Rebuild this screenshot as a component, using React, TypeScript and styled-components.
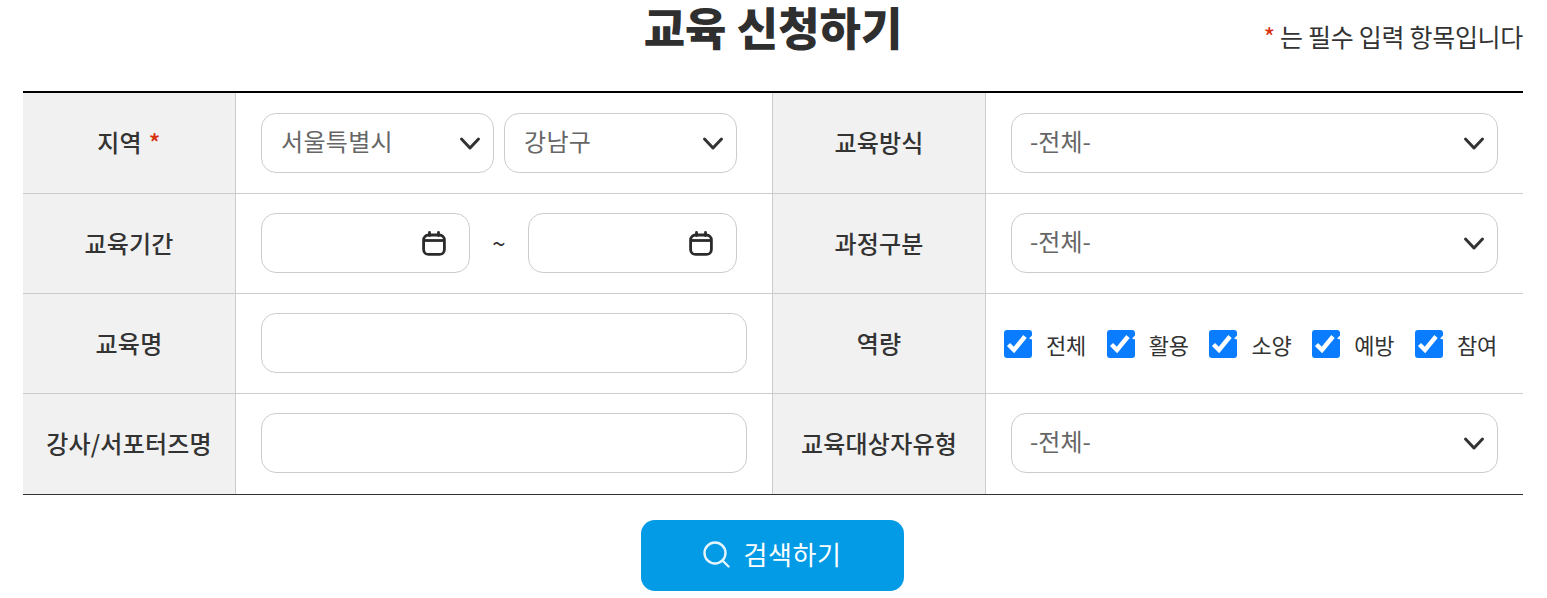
import React from "react";
import styled, { createGlobalStyle } from "styled-components";

const Global = createGlobalStyle`
  html, body { margin: 0; padding: 0; background: #fff; }
  body { font-family: "Noto Sans CJK KR", "Noto Sans", sans-serif; color: #333; }
  * { box-sizing: border-box; }
`;

const Page = styled.div`
  width: 1547px;
  height: 598px;
  overflow: hidden;
  padding: 0 24px 0 23px;
`;
const Header = styled.header`
  display: grid;
  grid-template-columns: 1fr auto 1fr;
  height: 91px;
`;
const Title = styled.h2`
  grid-column: 2;
  margin: 0;
  padding-top: 5px;
  font-size: 45px;
  line-height: 44px;
  font-weight: 900;
  color: #2f2f2f;
`;
const Note = styled.p`
  grid-column: 3;
  justify-self: end;
  margin: 19px 0 0;
  font-size: 25px;
  line-height: 34px;
  color: #333;
  letter-spacing: -0.3px;
`;
const Star = styled.span`
  color: #d9300f;
`;
const Table = styled.div`
  display: grid;
  grid-template-columns: 213px 537px 213px 537px;
  grid-template-rows: 101px 100px 100px 100px;
  border-top: 2px solid #000;
  border-bottom: 1px solid #333;
`;
const Th = styled.div<{ $last?: boolean }>`
  display: flex;
  align-items: center;
  justify-content: center;
  gap: 7px;
  background: #f1f1f1;
  padding-bottom: ${(p) => (p.$last ? "4px" : "3px")};
  border-right: 1px solid #ccc;
  border-bottom: ${(p) => (p.$last ? "none" : "1px solid #ccc")};
  font-size: 24px;
  font-weight: 500;
  color: #333;
  letter-spacing: 0.2px;
`;
const Td = styled.div<{ $last?: boolean; $edge?: boolean }>`
  display: flex;
  align-items: center;
  gap: 10px;
  padding: 0 25px ${(p) => (p.$last ? "2px" : "1px")};
  border-right: ${(p) => (p.$edge ? "none" : "1px solid #ccc")};
  border-bottom: ${(p) => (p.$last ? "none" : "1px solid #ccc")};
`;
const CheckTd = styled(Td)`
  padding: 0 26px 1px 18px;
  justify-content: space-between;
  gap: 0;
`;
const SelectWrap = styled.div<{ $w: number }>`
  position: relative;
  width: ${(p) => p.$w}px;
  height: 60px;
  flex: none;
`;
const Select = styled.select<{ $narrow?: boolean }>`
  width: 100%;
  height: 100%;
  appearance: none;
  background: #fff;
  border: 1px solid #ccc;
  border-radius: 15px;
  padding: 0 50px 5px ${(p) => (p.$narrow ? "19px" : "18px")};
  font-family: inherit;
  font-size: 24px;
  letter-spacing: ${(p) => (p.$narrow ? "0.3px" : "0")};
  color: #666;
  outline: none;
`;
const Chevron = styled.svg`
  position: absolute;
  right: 12px;
  top: 19px;
  pointer-events: none;
`;
const Input = styled.input<{ $w: number }>`
  width: ${(p) => p.$w}px;
  height: 60px;
  flex: none;
  background: #fff;
  border: 1px solid #ccc;
  border-radius: 15px;
  padding: 0 18px;
  font-family: inherit;
  font-size: 24px;
  outline: none;
`;
const DateWrap = styled.div`
  position: relative;
  width: 209px;
  height: 60px;
  flex: none;
`;
const CalIcon = styled.svg`
  position: absolute;
  right: 24px;
  top: 18px;
`;
const Tilde = styled.span`
  width: 58px;
  margin: 0 -10px;
  padding-bottom: 2px;
  flex: none;
  text-align: center;
  font-size: 24px;
  color: #333;
`;
const CheckItem = styled.label`
  display: flex;
  align-items: center;
  gap: 14px;
  padding-top: 1px;
  font-size: 22px;
  color: #333;
  letter-spacing: -0.2px;
`;
const CheckBox = styled.svg`
  flex: none;
`;
const Actions = styled.div`
  display: flex;
  justify-content: center;
  padding: 25px 1px 0 0;
`;
const SearchButton = styled.button`
  display: flex;
  align-items: center;
  justify-content: center;
  gap: 13px;
  width: 263px;
  height: 71px;
  background: #039be5;
  border: none;
  border-radius: 14px;
  color: #fff;
  font-family: inherit;
  font-size: 26px;
  letter-spacing: 0.6px;
  padding: 0 1px 4px 0;
`;

const Arrow = () => (
  <Chevron width="24" height="22" viewBox="0 0 24 22" fill="none">
    <path d="M3.5 7l8.5 9 8.5-9" stroke="#333" strokeWidth="3" strokeLinecap="round" strokeLinejoin="round" />
  </Chevron>
);

const Drop = ({ w, value }: { w: number; value: string }) => (
  <SelectWrap $w={w}>
    <Select defaultValue={value} $narrow={w < 300}>
      <option>{value}</option>
    </Select>
    <Arrow />
  </SelectWrap>
);

const DateField = () => (
  <DateWrap>
    <Input $w={209} />
    <CalIcon width="24" height="25" viewBox="0 0 24 25" fill="none">
      <rect x="1.6" y="4" width="20.8" height="19.4" rx="5" stroke="#2b2b2b" strokeWidth="2.8" />
      <path d="M2 9.5h20" stroke="#2b2b2b" strokeWidth="2.8" />
      <path d="M7.5 1.5v3M16.5 1.5v3" stroke="#2b2b2b" strokeWidth="2.8" strokeLinecap="round" />
    </CalIcon>
  </DateWrap>
);

const Check = ({ label }: { label: string }) => (
  <CheckItem>
    <CheckBox width="28" height="28" viewBox="0 0 28 28">
      <rect width="28" height="28" rx="3" fill="#0a7cff" />
      <path d="M4.5 14.5l5.5 5.5L21 6.5" fill="none" stroke="#fff" strokeWidth="4.4" />
      <path d="M25 8.5l3-3v4z" fill="#fff" />
    </CheckBox>
    {label}
  </CheckItem>
);

export default function App() {
  return (
    <>
      <Global />
      <Page>
        <Header>
          <Title>교육 신청하기</Title>
          <Note>
            <Star>*</Star> 는 필수 입력 항목입니다
          </Note>
        </Header>
        <Table>
          <Th>
            <span>지역</span>
            <Star>*</Star>
          </Th>
          <Td>
            <Drop w={233} value="서울특별시" />
            <Drop w={233} value="강남구" />
          </Td>
          <Th>교육방식</Th>
          <Td $edge>
            <Drop w={487} value="-전체-" />
          </Td>

          <Th>교육기간</Th>
          <Td>
            <DateField />
            <Tilde>~</Tilde>
            <DateField />
          </Td>
          <Th>과정구분</Th>
          <Td $edge>
            <Drop w={487} value="-전체-" />
          </Td>

          <Th>교육명</Th>
          <Td>
            <Input $w={486} />
          </Td>
          <Th>역량</Th>
          <CheckTd $edge>
            <Check label="전체" />
            <Check label="활용" />
            <Check label="소양" />
            <Check label="예방" />
            <Check label="참여" />
          </CheckTd>

          <Th $last>강사/서포터즈명</Th>
          <Td $last>
            <Input $w={486} />
          </Td>
          <Th $last>교육대상자유형</Th>
          <Td $last $edge>
            <Drop w={487} value="-전체-" />
          </Td>
        </Table>
        <Actions>
          <SearchButton>
            <svg width="28" height="28" viewBox="0 0 28 28" fill="none">
              <circle cx="13" cy="13" r="10.5" stroke="#e6f5fd" strokeWidth="2.4" />
              <path d="M20.5 20.5l6 6" stroke="#e6f5fd" strokeWidth="2.4" strokeLinecap="round" />
            </svg>
            검색하기
          </SearchButton>
        </Actions>
      </Page>
    </>
  );
}
